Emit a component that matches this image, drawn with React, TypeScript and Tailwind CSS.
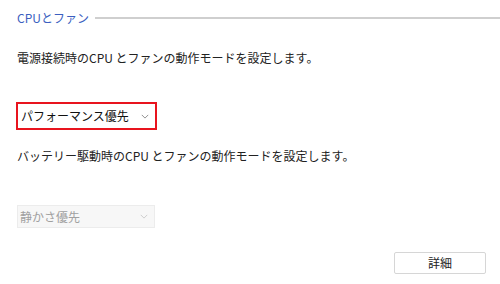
import React from 'react';

const font = { fontFamily: '"Noto Sans CJK JP", "Noto Sans", sans-serif' };

const Chevron = ({ className }: { className?: string }) => (
  <svg viewBox="0 0 10 6" className={className} fill="none" stroke="currentColor" strokeWidth="1">
    <path d="M1 1l4 4 4-4" />
  </svg>
);

export default function App() {
  return (
    <div className="w-[500px] h-[284px] bg-white overflow-hidden text-[12px] text-[#222]" style={font}>
      {/* Section header */}
      <div className="flex items-center pt-[9px] pl-[17px]">
        <span className="text-[#3b5fc0] leading-[18px]">CPUとファン</span>
        <div className="flex-1 ml-[6px] h-[2px] bg-[#cfcfcf]" />
      </div>

      <p className="pl-[17px] mt-[22px] leading-[18px]">電源接続時のCPU とファンの動作モードを設定します。</p>

      <div className="pl-[16px] mt-[35px]">
        <div className="w-[141px] h-[28px] border-2 border-[#e8141e] flex items-center justify-between pl-[3px] pr-[6px]">
          <span className="text-[#111]">パフォーマンス優先</span>
          <Chevron className="w-[8px] h-[5px] text-[#777]" />
        </div>
      </div>

      <p className="pl-[17px] mt-[17px] leading-[18px]">バッテリー駆動時のCPU とファンの動作モードを設定します。</p>

      <div className="pl-[17px] mt-[40px]">
        <div className="w-[138px] h-[23px] bg-[#f7f7f7] border border-[#ececec] flex items-center justify-between pl-[2px] pr-[6px]">
          <span className="text-[#a0a0a0]">静かさ優先</span>
          <Chevron className="w-[8px] h-[5px] text-[#c4c4c4]" />
        </div>
      </div>

      <div className="flex justify-end pr-[14px] mt-[24px]">
        <button className="w-[92px] h-[22px] bg-white border border-[#d6d6d6] rounded-[2px] text-[#222] flex items-center justify-center">
          詳細
        </button>
      </div>
    </div>
  );
}
